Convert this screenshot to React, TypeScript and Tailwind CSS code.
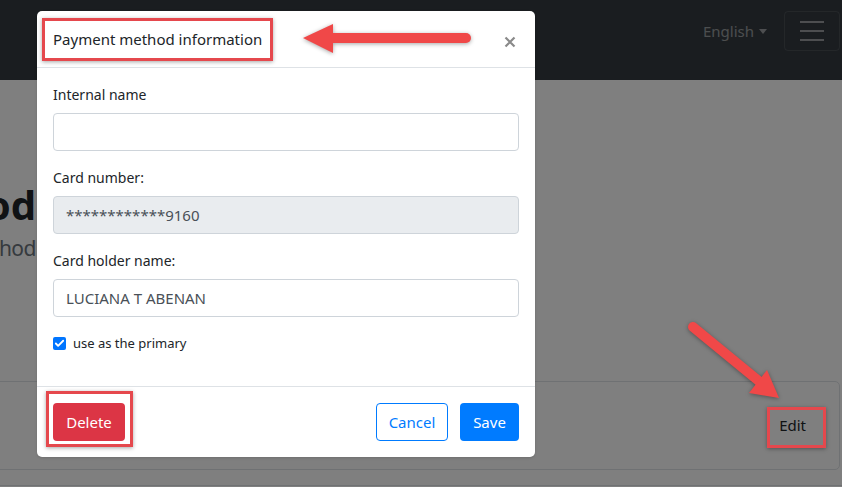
import { Check } from 'lucide-react';

const FONT = { fontFamily: '"Noto Sans", "Open Sans", Arial, sans-serif' };

function Field({ label, value, disabled }: { label: string; value?: string; disabled?: boolean }) {
  return (
    <div className="mb-4">
      <label className="block text-[14px] leading-[21px] text-[#212529] mb-2">{label}</label>
      <div className={`h-[38px] rounded-[4px] border border-[#ced4da] px-3 flex items-center text-[15px] text-[#495057] ${disabled ? 'bg-[#e9ecef]' : 'bg-white'}`}>
        {value}
      </div>
    </div>
  );
}

export default function App() {
  return (
    <div className="relative w-[842px] h-[487px] overflow-hidden bg-white" style={FONT}>
      {/* page behind */}
      <nav className="h-[80px] bg-[#343a40] flex items-start justify-end pt-[11px] pr-[2px]">
        <span className="mt-[9px] text-[15px] leading-[22px] text-white/50 mr-[17px] flex items-center gap-[5px]">
          English
          <span className="inline-block w-0 h-0 border-x-[4px] border-x-transparent border-t-[5px] border-t-white/50" />
        </span>
        <button className="w-[56px] h-[40px] rounded-[4px] border border-white/10 flex flex-col items-center justify-center gap-[7px]">
          <span className="block w-[24px] h-[2px] bg-white/50" />
          <span className="block w-[24px] h-[2px] bg-white/50" />
          <span className="block w-[24px] h-[2px] bg-white/50" />
        </button>
      </nav>
      <main>
        <div className="mt-[101px] w-[36px] flex justify-end">
          <h1 className="whitespace-nowrap text-[40px] font-bold leading-[48px] text-[#212529]">Payment method</h1>
        </div>
        <div className="mt-[4px] w-[36px] flex justify-end">
          <p className="whitespace-nowrap text-[21px] tracking-[-0.5px] leading-[30px] text-[#6c757d]">Payment method</p>
        </div>
        <div className="mt-[118px] -ml-[10px] mr-[2px] h-[89px] border border-[#dee2e6] rounded-[5px] flex items-center justify-end pr-[33px]">
          <span className="text-[15px] text-[#212529]">Edit</span>
        </div>
        <div className="mt-[15px] border-t border-[#dee2e6]" />
      </main>

      {/* backdrop */}
      <div className="absolute inset-0 bg-black/50" />

      {/* modal */}
      <div className="absolute left-[37px] top-[11px] w-[498px] bg-white rounded-[5px] shadow-sm">
        <div className="h-[57px] border-b border-[#dee2e6] flex items-center justify-between pl-4 pr-[19px]">
          <h5 className="text-[15px] text-[#212529] pt-[1px]">Payment method information</h5>
          <svg width="12" height="12" viewBox="0 0 12 12" className="mt-[6px]">
            <path d="M1.5 1.5 L10.5 10.5 M10.5 1.5 L1.5 10.5" stroke="#8a8a8a" strokeWidth="2.2" />
          </svg>
        </div>
        <div className="p-4">
          <Field label="Internal name" />
          <Field label="Card number:" value="************9160" disabled />
          <Field label="Card holder name:" value="LUCIANA T ABENAN" />
          <div className="mb-4 flex items-center h-[21px] text-[13px] text-[#212529]">
            <span className="w-[13px] h-[13px] rounded-[2px] bg-[#0075ff] flex items-center justify-center mr-[7px]">
              <Check size={11} strokeWidth={4} color="white" />
            </span>
            use as the primary
          </div>
        </div>
        <div className="border-t border-[#dee2e6] p-4 flex items-center">
          <button className="w-[72px] h-[38px] rounded-[4px] bg-[#dc3545] text-white text-[15px]">Delete</button>
          <button className="ml-auto w-[72px] h-[38px] rounded-[4px] border border-[#007bff] text-[#007bff] text-[15px]">Cancel</button>
          <button className="ml-[12px] w-[59px] h-[38px] rounded-[4px] bg-[#007bff] text-white text-[15px]">Save</button>
        </div>
      </div>

      {/* annotations */}
      <div className="absolute left-[42px] top-[18px] w-[231px] h-[43px] border-[3px] border-[#e5484d] shadow-[0_1px_4px_rgba(0,0,0,0.35)]" />
      <div className="absolute left-[46px] top-[391px] w-[87px] h-[56px] border-[3px] border-[#e5484d] shadow-[0_1px_4px_rgba(0,0,0,0.35)]" />
      <div className="absolute left-[767px] top-[407px] w-[59px] h-[41px] border-[3px] border-[#e5484d] shadow-[0_1px_4px_rgba(0,0,0,0.35)]" />
      <svg className="absolute left-0 top-0" width="842" height="487" style={{ filter: 'drop-shadow(0 1px 2px rgba(0,0,0,0.35))' }}>
        <line x1="466" y1="38" x2="325" y2="38" stroke="#f04848" strokeWidth="10" strokeLinecap="round" />
        <polygon points="303,38 333,24 333,53" fill="#f04848" />
        <line x1="693" y1="327" x2="760" y2="382" stroke="#f04848" strokeWidth="10" strokeLinecap="round" />
        <polygon points="779,398 749,393 767,370" fill="#f04848" />
      </svg>
    </div>
  );
}
